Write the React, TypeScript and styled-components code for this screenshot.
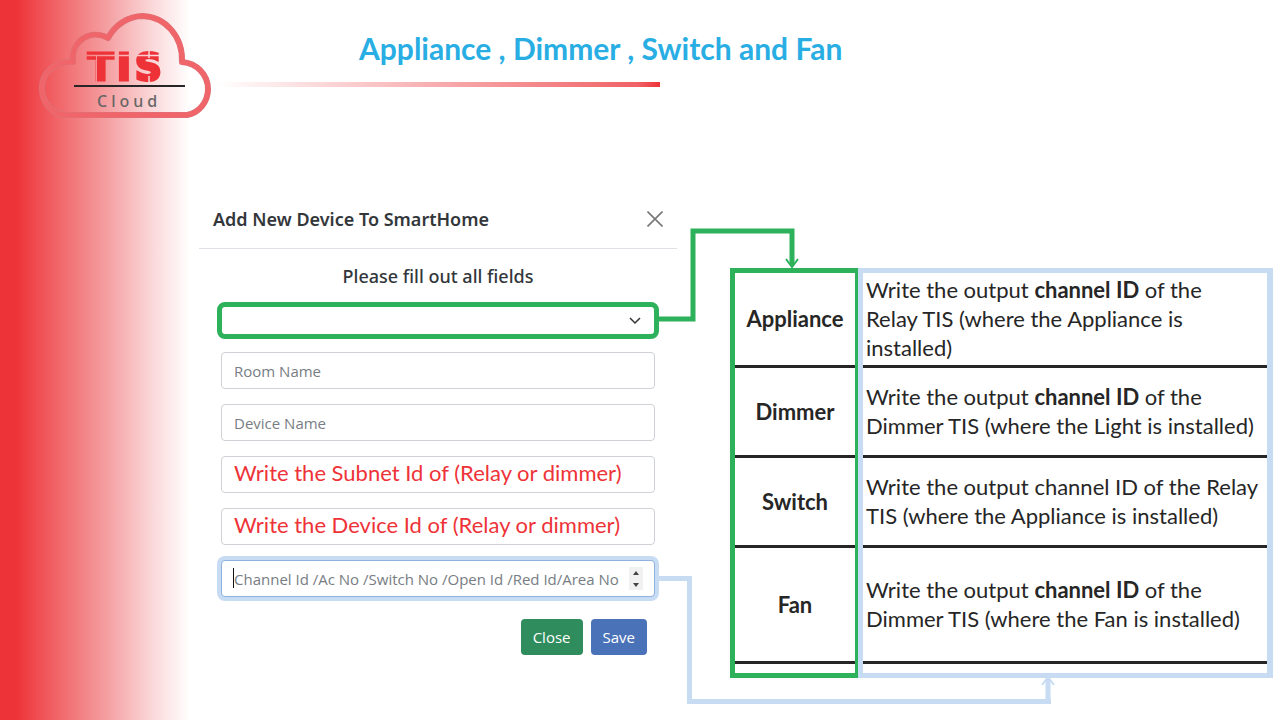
import React from "react";
import styled, { createGlobalStyle } from "styled-components";

const red = "#ee3338";
const green = "#2db15a";
const blue = "#c7dbf3";
const ink = "#262626";
const slideFont = 'Lato, "Open Sans", sans-serif';
const formFont = '"Open Sans", "Noto Sans", sans-serif';
const headingFont = '"Noto Sans", "Open Sans", sans-serif';

const GlobalStyle = createGlobalStyle`
  *, *::before, *::after { box-sizing: border-box; }
  body { margin: 0; background: #fff; color: ${ink}; font-family: ${slideFont}; }
`;

const Slide = styled.div`
  min-height: 100vh;
  background: linear-gradient(
    90deg,
    ${red} 0,
    ${red} 16px,
    #f16d70 64px,
    #f5a3a5 110px,
    #fbdadb 154px,
    #fff 190px
  ) no-repeat;
`;

const Header = styled.header`
  display: flex;
  align-items: flex-start;
  height: 189px;
  padding-left: 36px;
`;

const Logo = styled.svg`
  flex: none;
  width: 180px;
  height: 124px;
`;

const Heading = styled.div`
  width: 444px;
  padding-top: 30px;
`;

const Title = styled.h1`
  margin: 0;
  padding-left: 143px;
  font-size: 30px;
  line-height: 36px;
  font-weight: 700;
  color: #29aee4;
  white-space: nowrap;
`;

const Rule = styled.div`
  height: 5px;
  margin-top: 16px;
  background: linear-gradient(90deg, #fff 0, #f06266 95%, ${red} 100%);
`;

const Main = styled.main`
  position: relative;
  display: flex;
  align-items: flex-start;
  gap: 53px;
  padding: 0 7px 42px 199px;
`;

const Dialog = styled.form`
  flex: none;
  width: 478px;
  font-family: ${headingFont};
  color: #33373b;
`;

const DialogHeader = styled.div`
  display: flex;
  align-items: center;
  justify-content: space-between;
  height: 60px;
  padding: 0 14px;
  border-bottom: 1px solid #dee2e6;
`;

const DialogTitle = styled.h2`
  margin: 0;
  font-size: 18px;
  line-height: 28px;
  font-weight: 600;
`;

const IconButton = styled.button`
  display: flex;
  padding: 0;
  border: 0;
  background: none;
  color: #777;
`;

const Fields = styled.div`
  display: flex;
  flex-direction: column;
  gap: 15px;
  padding: 13px 22px 0;
`;

const Prompt = styled.p`
  margin: 0;
  font-size: 18px;
  line-height: 28px;
  font-weight: 500;
  text-align: center;
`;

const SelectBox = styled.div`
  position: relative;
  margin: -3px -4px -2px;
`;

const Select = styled.select`
  display: block;
  width: 100%;
  height: 37px;
  border: 5px solid ${green};
  border-radius: 8px;
  background: #fff;
  appearance: none;
`;

const Chevron = styled.svg`
  position: absolute;
  top: 15px;
  right: 18px;
`;

const Input = styled.input<{ $note?: boolean; $active?: boolean }>`
  display: block;
  width: 100%;
  height: 37px;
  padding: ${(p) => (p.$note ? "0 12px 5px" : "0 12px")};
  border: 1px solid ${(p) => (p.$active ? "#8fb1e0" : "#ced2d6")};
  border-radius: 4px;
  background: #fff;
  box-shadow: ${(p) => (p.$active ? `0 0 0 4px ${blue}` : "none")};
  font-family: ${(p) => (p.$note ? slideFont : formFont)};
  font-size: ${(p) => (p.$note ? 22 : 15)}px;
  color: ${(p) => (p.$note ? red : "#33373b")};
  outline: none;
  &::placeholder { color: #777d83; opacity: 1; }
`;

const ActiveField = styled.div`
  position: relative;
`;

const Caret = styled.span`
  position: absolute;
  left: 12px;
  top: 8px;
  width: 1px;
  height: 20px;
  background: #111;
`;

const Stepper = styled.svg`
  position: absolute;
  right: 12px;
  top: 7px;
  background: #f1f1f1;
`;

const Actions = styled.div`
  display: flex;
  justify-content: flex-end;
  gap: 8px;
  padding: 22px 30px 0;
`;

const Action = styled.button<{ $color: string }>`
  height: 36px;
  padding: 0 12px;
  border: 0;
  border-radius: 4px;
  background: ${(p) => p.$color};
  color: #fff;
  font-family: ${formFont};
  font-size: 15px;
`;

const Guide = styled.table`
  flex: 1;
  margin-top: 79px;
  border-spacing: 0;
  table-layout: fixed;
  font-size: 22px;
  line-height: 29px;
  color: ${ink};
`;

const Row = styled.tr<{ $height: number }>`
  height: ${(p) => p.$height}px;
`;

const Name = styled.th<{ $first?: boolean }>`
  width: 128px;
  padding: 0 0 4px;
  border: 0 solid ${green};
  border-width: ${(p) => (p.$first ? 5 : 0)}px 3px 0 5px;
  box-shadow: inset 0 -3px ${ink};
  font-weight: 700;
  text-align: center;
`;

const Text = styled.td<{ $first?: boolean }>`
  padding: 0 2px 5px 3px;
  border: 0 solid ${blue};
  border-width: ${(p) => (p.$first ? 5 : 0)}px 6px 0 5px;
  box-shadow: inset 0 -3px ${ink};
`;

const NameEnd = styled.td`
  padding: 0;
  border: 5px solid ${green};
  border-width: 0 3px 5px 5px;
`;

const TextEnd = styled.td`
  padding: 0;
  border: 5px solid ${blue};
  border-width: 0 6px 5px 5px;
`;

const TypeLink = styled.svg`
  position: absolute;
  left: 658px;
  top: 40px;
  overflow: visible;
`;

const ChannelLink = styled.div`
  position: absolute;
  left: 658px;
  right: 229px;
  top: 387px;
  height: 128px;
`;

const LinkStart = styled.div`
  width: 34px;
  height: 123px;
  border: solid ${blue};
  border-width: 5px 5px 0 0;
`;

const LinkRun = styled.div`
  height: 5px;
  margin-left: 29px;
  background: ${blue};
`;

const LinkEnd = styled.svg`
  position: absolute;
  right: -4px;
  bottom: 0;
`;

const rows = [
  { name: "Appliance", height: 100, bold: true, rest: " of the Relay\u00a0TIS (where the Appliance is installed)" },
  { name: "Dimmer", height: 90, bold: true, rest: " of the Dimmer TIS (where the Light is installed)" },
  { name: "Switch", height: 90, bold: false, rest: " of the Relay TIS (where the Appliance is installed)" },
  { name: "Fan", height: 116, bold: true, rest: " of the Dimmer TIS (where the Fan is installed)" },
];

function CloudLogo() {
  const cloud =
    "M73 62C56 61 42 72 42 88C42 103 53 115 67 115H187C199 113 208 102 208 89C208 75 197 63 182 62C183 36 165 17 143 16C128 16 115 25 108 38C90 28 70 42 73 62Z";
  return (
    <Logo viewBox="36 0 180 124" role="img" aria-label="TIS Cloud">
      <defs>
        <mask id="stencil" maskUnits="userSpaceOnUse" x="80" y="45" width="90" height="40">
          <rect x="80" y="45" width="90" height="40" fill="#fff" />
          <path d="M80 55.500H170M149 50V58M149 76V84" stroke="#000" strokeWidth="1.500" />
          <path d="M96.500 56V83" stroke="#000" strokeWidth="1" />
        </mask>
      </defs>
      <path d={cloud} fill="none" stroke="#d9757a" strokeWidth="6" strokeLinejoin="round" />
      <path d={cloud} fill="none" stroke="#f0656a" strokeWidth="5" strokeLinejoin="round" />
      <g fontFamily="DejaVu Sans" fontWeight="700" fontSize="37" fill={red} stroke={red} mask="url(#stencil)">
        <text x="88 117 135" y="80" strokeWidth="3">
          TIS
        </text>
      </g>
      <path d="M74 86H185" stroke={ink} strokeWidth="2" />
      <text x="97" y="107" fontFamily="Noto Sans" fontWeight="500" fontSize="16" letterSpacing="4" fill="#666">
        Cloud
      </text>
    </Logo>
  );
}

export default function App() {
  return (
    <Slide>
      <GlobalStyle />
      <Header>
        <CloudLogo />
        <Heading>
          <Title>Appliance , Dimmer , Switch and Fan</Title>
          <Rule />
        </Heading>
      </Header>
      <Main>
        <Dialog>
          <DialogHeader>
            <DialogTitle>Add New Device To SmartHome</DialogTitle>
            <IconButton type="button" aria-label="Dismiss">
              <svg width="16" height="16" viewBox="0 0 16 16" fill="none" stroke="currentColor" strokeWidth="1.6">
                <path d="M0.500 0.500L15.500 15.500M15.500 0.500L0.500 15.500" />
              </svg>
            </IconButton>
          </DialogHeader>
          <Fields>
            <Prompt>Please fill out all fields</Prompt>
            <SelectBox>
              <Select aria-label="Device type" />
              <Chevron width="12" height="8" viewBox="0 0 12 8" fill="none" stroke="#333" strokeWidth="1.5">
                <path d="M1 1L6 6L11 1" />
              </Chevron>
            </SelectBox>
            <Input aria-label="Room Name" placeholder="Room Name" />
            <Input aria-label="Device Name" placeholder="Device Name" />
            <Input $note aria-label="Subnet Id" defaultValue="Write the Subnet Id of (Relay or dimmer)" />
            <Input $note aria-label="Device Id" defaultValue="Write the Device Id of (Relay or dimmer)" />
            <ActiveField>
              <Input
                $active
                aria-label="Channel Id"
                placeholder="Channel Id /Ac No /Switch No /Open Id /Red Id/Area No"
              />
              <Caret />
              <Stepper width="14" height="23" viewBox="0 0 14 23" fill="#444">
                <path d="M4 8L7 4L10 8ZM4 16L7 20L10 16Z" />
              </Stepper>
            </ActiveField>
          </Fields>
          <Actions>
            <Action type="button" $color="#2f8c5c">Close</Action>
            <Action type="submit" $color="#4a72b8">Save</Action>
          </Actions>
        </Dialog>
        <Guide>
          <tbody>
            {rows.map((row, i) => (
              <Row key={row.name} $height={row.height}>
                <Name scope="row" $first={i === 0}>{row.name}</Name>
                <Text $first={i === 0}>
                  Write the output {row.bold ? <b>channel ID</b> : "channel ID"}
                  {row.rest}
                </Text>
              </Row>
            ))}
            <Row $height={14} aria-hidden="true">
              <NameEnd />
              <TextEnd />
            </Row>
          </tbody>
        </Guide>
        <TypeLink width="140" height="94" viewBox="0 0 140 94" fill="none" stroke={green}>
          <path d="M0 90H35V2H134V36" strokeWidth="5" />
          <path d="M128 30L134 38L140 30" strokeWidth="2" />
        </TypeLink>
        <ChannelLink>
          <LinkStart />
          <LinkRun />
          <LinkEnd width="14" height="28" viewBox="0 0 14 28" fill="none" stroke={blue}>
            <path d="M7 28V3" strokeWidth="5" />
            <path d="M1 9L7 1L13 9" strokeWidth="2" />
          </LinkEnd>
        </ChannelLink>
      </Main>
    </Slide>
  );
}
